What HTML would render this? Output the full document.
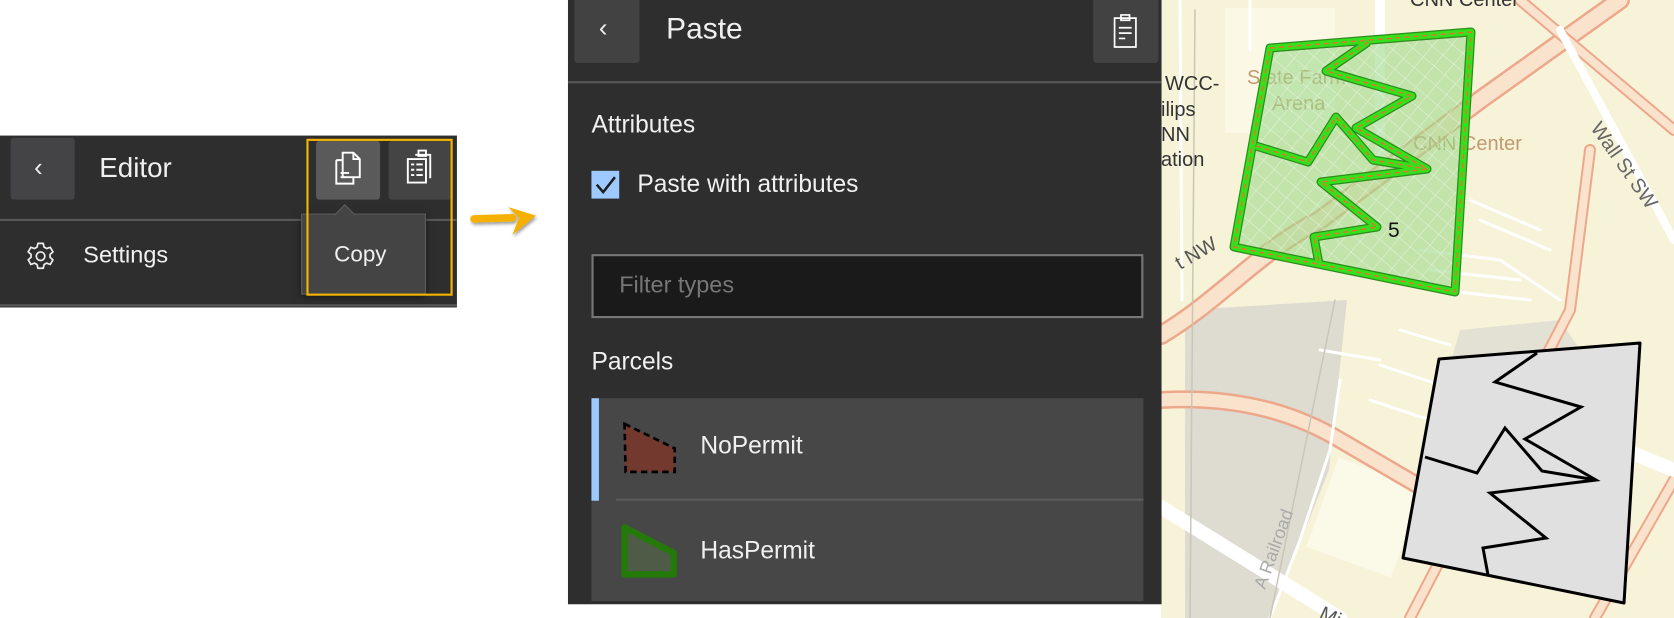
<!DOCTYPE html>
<html><head><meta charset="utf-8"><style>
*{box-sizing:border-box;margin:0;padding:0}
html,body{width:1674px;height:618px;overflow:hidden;background:#fff;font-family:"Liberation Sans",sans-serif}
#map{position:absolute;left:0;top:0}
#ui{position:absolute;left:0;top:0;width:1568px;height:579px;transform:scale(1.0676);transform-origin:0 0}
.abs{position:absolute}
.t{position:absolute;color:#f0f0f0;white-space:nowrap;line-height:1}
</style></head><body>
<svg id="map" width="1674" height="618" viewBox="0 0 1674 618">
 <rect x="1161" y="0" width="513" height="618" fill="#f7f3d9"/>
 <rect x="1225" y="8" width="110" height="125" fill="#fbf8e6"/>
 <polygon points="1185,310 1347,300 1329,470 1270,618 1185,618" fill="#dedcd0"/>
 <polygon points="1460,330 1560,320 1600,380 1500,420 1440,400" fill="#e3e1d3"/>
 <rect x="1320" y="470" width="90" height="95" fill="#fbf9e8" transform="rotate(20 1365 517)"/>
 <g fill="none" stroke-linecap="round">
  <path d="M1161,335 C1220,300 1260,250 1320,220 L1480,100 L1620,0" stroke="#eda88c" stroke-width="20"/>
  <path d="M1161,335 C1220,300 1260,250 1320,220 L1480,100 L1620,0" stroke="#f9e3cc" stroke-width="15"/>
  <path d="M1161,400 C1230,396 1290,410 1340,440 L1460,510" stroke="#eda88c" stroke-width="18"/>
  <path d="M1161,400 C1230,396 1290,410 1340,440 L1460,510" stroke="#f9e3cc" stroke-width="13"/>
  <path d="M1590,150 L1570,310 L1410,618" stroke="#eda88c" stroke-width="12"/>
  <path d="M1590,150 L1570,310 L1410,618" stroke="#f9e3cc" stroke-width="8"/>
  <path d="M1674,480 L1595,618" stroke="#eda88c" stroke-width="12"/>
  <path d="M1674,480 L1595,618" stroke="#f9e3cc" stroke-width="8"/>
  <path d="M1520,0 L1674,130" stroke="#eda88c" stroke-width="12"/>
  <path d="M1520,0 L1674,130" stroke="#f9e3cc" stroke-width="8"/>
  <path d="M1560,30 L1674,240" stroke="#fff" stroke-width="8"/>
  <path d="M1161,507 L1340,618" stroke="#fff" stroke-width="14"/>
  <path d="M1600,440 L1674,470" stroke="#fff" stroke-width="14"/>
  <path d="M1340,380 L1330,450 L1300,540 L1270,618" stroke="#fff" stroke-width="3"/>
  <path d="M1400,330 L1450,345 M1380,365 L1440,385 M1370,400 L1430,420 M1320,350 L1380,360" stroke="#fff" stroke-width="3"/>
  <path d="M1420,250 L1500,260 L1560,300 M1430,270 L1520,280 M1440,290 L1530,300 M1470,200 L1540,230 M1480,220 L1550,250" stroke="#fff" stroke-width="3"/>
  <path d="M1180,0 L1182,300 M1250,0 L1250,50" stroke="#fff" stroke-width="3"/>
  <path d="M1195,10 L1190,618" stroke="#c9c6b8" stroke-width="1.5"/>
  <path d="M1335,300 L1270,618" stroke="#c9c6b8" stroke-width="1.5"/>
  <path d="M1380,0 L1380,160" stroke="#fff" stroke-width="10"/>
 </g>
 <g font-family="Liberation Sans, sans-serif" font-size="20" fill="#333">
  <text x="1165" y="90">WCC-</text><text x="1161" y="116">ilips</text>
  <text x="1161" y="141">NN</text><text x="1161" y="166">ation</text>
  <text x="1410" y="6">CNN Center</text>
 </g>
 <g font-family="Liberation Sans, sans-serif" font-size="20" fill="#c09a70">
  <text x="1247" y="84">State Farm</text><text x="1272" y="110">Arena</text>
  <text x="1413" y="150">CNN Center</text>
 </g>
 <text x="1590" y="128" font-size="20" fill="#666" font-family="Liberation Sans, sans-serif" transform="rotate(55 1590 128)">Wall St SW</text>
 <text x="1180" y="270" font-size="20" fill="#555" font-family="Liberation Sans, sans-serif" transform="rotate(-30 1180 270)">t NW</text>
 <text x="1265" y="590" font-size="18" fill="#aaa" font-family="Liberation Sans, sans-serif" transform="rotate(-70 1265 590)">A Railroad</text>
 <text x="1318" y="618" font-size="20" fill="#555" font-family="Liberation Sans, sans-serif" transform="rotate(25 1318 618)">Mi</text>
 <defs>
  <pattern id="hx" width="14" height="14" patternUnits="userSpaceOnUse" patternTransform="rotate(40)">
   <path d="M0,0 L14,0 M0,0 L0,14" stroke="#fff" stroke-width="1" opacity=".6"/>
  </pattern>
 </defs>
 <g transform="translate(-169,-311)">
  <polygon points="1439,359 1640,343 1624,603 1403,558" fill="#9ed88a" opacity=".6"/>
  <polygon points="1439,359 1640,343 1624,603 1403,558" fill="url(#hx)"/>
  <g fill="none" stroke-linejoin="round">
   <path d="M1439,359 L1640,343 L1624,603 L1403,558 Z M1537,353 L1495,382 L1581,407 L1525,439 L1596,480 L1490,493 L1546,538 L1483,548 L1488,575 M1425,457 L1477,473 L1505,428 L1542,471 L1596,480" stroke="#2f8a1f" stroke-width="9"/>
   <path d="M1439,359 L1640,343 L1624,603 L1403,558 Z M1537,353 L1495,382 L1581,407 L1525,439 L1596,480 L1490,493 L1546,538 L1483,548 L1488,575 M1425,457 L1477,473 L1505,428 L1542,471 L1596,480" stroke="#34e01c" stroke-width="6.5"/>
   <path d="M1439,359 L1640,343 L1624,603 L1403,558 Z M1537,353 L1495,382 L1581,407 L1525,439 L1596,480 L1490,493 L1546,538 L1483,548 L1488,575 M1425,457 L1477,473 L1505,428 L1542,471 L1596,480" stroke="#e8722a" stroke-width="1.5" stroke-dasharray="5 4"/>
  </g>
 </g>
 <text x="1388" y="237" font-size="21" fill="#111" font-family="Liberation Sans, sans-serif">5</text>
 <polygon points="1439,359 1640,343 1624,603 1403,558" fill="#e0e0e0" stroke="#000" stroke-width="3" stroke-linejoin="round"/>
 <path d="M1537,353 L1495,382 L1581,407 L1525,439 L1596,480 L1490,493 L1546,538 L1483,548 L1488,575 M1425,457 L1477,473 L1505,428 L1542,471 L1596,480" fill="none" stroke="#000" stroke-width="3" stroke-linejoin="miter"/>
</svg>

<div id="ui">
 <div class="abs" style="left:0;top:127px;width:428px;height:161px;background:#2f2e2f"></div>
 <div class="abs" style="left:10px;top:129px;width:60px;height:58px;background:#444345;border-radius:3px"></div>
 <div class="t" style="left:32px;top:146px;font-size:24px;color:#eee">‹</div>
 <div class="t" style="left:93px;top:144px;font-size:26px">Editor</div>
 <div class="abs" style="left:0;top:205px;width:428px;height:2px;background:#5a595a"></div>
 <div class="abs" style="left:0;top:285px;width:428px;height:2px;background:#5a595a"></div>
 <svg class="abs" style="left:24px;top:226px" width="28" height="28" viewBox="0 0 28 28"><path d="M11.5 2h5l.8 3.5 2.4 1.3 3.4-1.2 2.5 4.3-2.7 2.4v2.7l2.7 2.4-2.5 4.3-3.4-1.2-2.4 1.3-.8 3.5h-5l-.8-3.5-2.4-1.3-3.4 1.2-2.5-4.3 2.7-2.4v-2.7L2.4 9.9l2.5-4.3 3.4 1.2 2.4-1.3z" fill="none" stroke="#eee" stroke-width="1.6" stroke-linejoin="round"/><circle cx="14" cy="14" r="4" fill="none" stroke="#eee" stroke-width="1.6"/></svg>
 <div class="t" style="left:78px;top:228px;font-size:22px">Settings</div>
 <div class="abs" style="left:296px;top:132px;width:60px;height:55px;background:#5b5a5b;border-radius:3px"></div>
 <div class="abs" style="left:364px;top:132px;width:60px;height:55px;background:#454445;border-radius:3px"></div>
 <svg class="abs" style="left:310px;top:140px" width="34" height="36" viewBox="0 0 34 36"><g fill="none" stroke="#fff" stroke-width="1.8"><path d="M11 3h10l6 6v17H11z"/><path d="M21 3v6h6"/><path d="M5 10h6M5 10v22h16v-6"/><path d="M9 22h8M9 26h5"/></g></svg>
 <svg class="abs" style="left:377px;top:138px" width="34" height="38" viewBox="0 0 34 38"><g fill="none" stroke="#fff" stroke-width="1.8"><path d="M12 7h14v22"/><path d="M15 3h7v5h-7z"/><path d="M5 11h17v22H5z"/><path d="M8 16h3M13 16h6M8 21h3M13 21h6M8 26h3M13 26h6"/></g></svg>
 <div class="abs" style="left:282px;top:200px;width:117px;height:76px;background:#454445;border:1px solid #5d5c5d;box-shadow:0 2px 6px rgba(0,0,0,.5)"></div>
 <div class="abs" style="left:316px;top:194px;width:14px;height:14px;background:#454445;border-left:1px solid #5d5c5d;border-top:1px solid #5d5c5d;transform:rotate(45deg)"></div>
 <div class="t" style="left:313px;top:228px;font-size:21px">Copy</div>
 <div class="abs" style="left:287px;top:130px;width:137px;height:147px;border:2px solid #f5b400"></div>
 <svg class="abs" style="left:440px;top:190px" width="66" height="34" viewBox="0 0 66 34"><defs><filter id="sh"><feDropShadow dx="1" dy="2" stdDeviation="1.5" flood-opacity=".4"/></filter></defs><g filter="url(#sh)"><path d="M4 15 L40 14" stroke="#f5b000" stroke-width="7" stroke-linecap="round" fill="none"/><path d="M36 4 L62 12 L40 30 L46 14z" fill="#f5b000"/></g></svg>

 <div class="abs" style="left:532px;top:0;width:556px;height:566px;background:#2f2e2f"></div>
 <div class="abs" style="left:538px;top:0;width:61px;height:59px;background:#434243;border-radius:0 0 3px 3px"></div>
 <div class="t" style="left:561px;top:15px;font-size:24px;color:#eee">‹</div>
 <div class="t" style="left:624px;top:13px;font-size:28px">Paste</div>
 <div class="abs" style="left:1024px;top:0;width:61px;height:59px;background:#434243;border-radius:0 0 3px 3px"></div>
 <svg class="abs" style="left:1040px;top:12px" width="28" height="36" viewBox="0 0 28 36"><g fill="none" stroke="#fff" stroke-width="1.6"><path d="M4 5h20v27H4z"/><path d="M10 2h8v5h-8z"/><path d="M8 14h12M8 19h12M8 24h6"/></g></svg>
 <div class="abs" style="left:532px;top:76px;width:556px;height:2px;background:#5a595a"></div>
 <div class="t" style="left:554px;top:105px;font-size:23px">Attributes</div>
 <div class="abs" style="left:554px;top:160px;width:26px;height:26px;background:#9ecbff"></div>
 <svg class="abs" style="left:554px;top:160px" width="26" height="26" viewBox="0 0 26 26"><path d="M5 13 L11 20 L22 6" fill="none" stroke="#1e1e1e" stroke-width="2.4"/></svg>
 <div class="t" style="left:597px;top:161px;font-size:23px">Paste with attributes</div>
 <div class="abs" style="left:554px;top:238px;width:517px;height:60px;background:#1a1a1a;border:2px solid #777"></div>
 <div class="t" style="left:580px;top:256px;font-size:22px;color:#777">Filter types</div>
 <div class="t" style="left:554px;top:327px;font-size:23px">Parcels</div>
 <div class="abs" style="left:554px;top:373px;width:517px;height:190px;background:#484748"></div>
 <div class="abs" style="left:554px;top:373px;width:7px;height:96px;background:#9ecbff"></div>
 <div class="abs" style="left:577px;top:467px;width:494px;height:2px;background:#5c5b5c"></div>
 <svg class="abs" style="left:582px;top:394px" width="52" height="52" viewBox="0 0 52 52"><path d="M3 3 L50 26 L50 48 L4 48 Z" fill="#73392f" stroke="#000" stroke-width="2.5" stroke-dasharray="6 4"/></svg>
 <div class="t" style="left:656px;top:406px;font-size:23px">NoPermit</div>
 <svg class="abs" style="left:580px;top:490px" width="56" height="52" viewBox="0 0 56 52"><path d="M5 4 L51 28 L51 48 L5 48 Z" fill="#4e5c47" stroke="#237a08" stroke-width="6" stroke-linejoin="round"/></svg>
 <div class="t" style="left:656px;top:504px;font-size:23px">HasPermit</div>
</div>
</body></html>
